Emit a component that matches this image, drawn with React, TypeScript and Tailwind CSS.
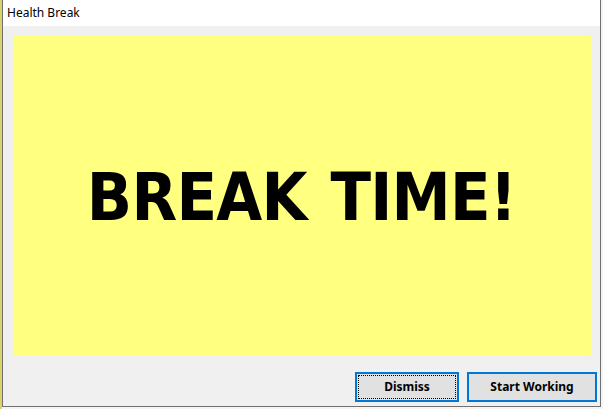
export default function App() {
  return (
    <div className="w-[603px] h-[409px] flex bg-[#f4f4f4] overflow-hidden" style={{ fontFamily: '"Noto Sans", "Liberation Sans", sans-serif' }}>
      {/* sliver of the desktop behind the dialog */}
      <div className="w-[2px] h-full bg-[#d9d36a]" />
      <div className="w-[599px] h-[407px] flex flex-col border-l border-r border-b border-[#707070] bg-[#f0f0f0]">
        <div className="h-[26px] bg-white flex items-center pl-[4px] text-[12px] text-black leading-none">
          Health Break
        </div>
        <div className="flex-1 flex flex-col pt-[10px]">
          <div className="h-[320px] ml-[10px] mr-[9px] bg-[#ffff80] flex items-center justify-center">
            <span
              className="text-[66px] font-bold text-black leading-none tracking-[-0.8px] [word-spacing:4px] scale-x-[0.9] mt-[4px] whitespace-nowrap"
              style={{ fontFamily: '"DejaVu Sans", Verdana, sans-serif' }}
            >
              BREAK TIME!
            </span>
          </div>
          <div className="flex justify-end gap-[8px] mt-[16px] pr-[3px]">
            <button className="w-[104px] h-[30px] border-2 border-[#0078d7] bg-[#e1e1e1] p-[1px]">
              <div className="w-full h-full border border-dotted border-black flex items-center justify-center text-[12px] font-bold text-black">
                Dismiss
              </div>
            </button>
            <button className="w-[130px] h-[30px] border-2 border-[#0078d7] bg-[#e1e1e1] flex items-center justify-center text-[12px] font-bold text-black">
              Start Working
            </button>
          </div>
        </div>
      </div>
    </div>
  );
}
